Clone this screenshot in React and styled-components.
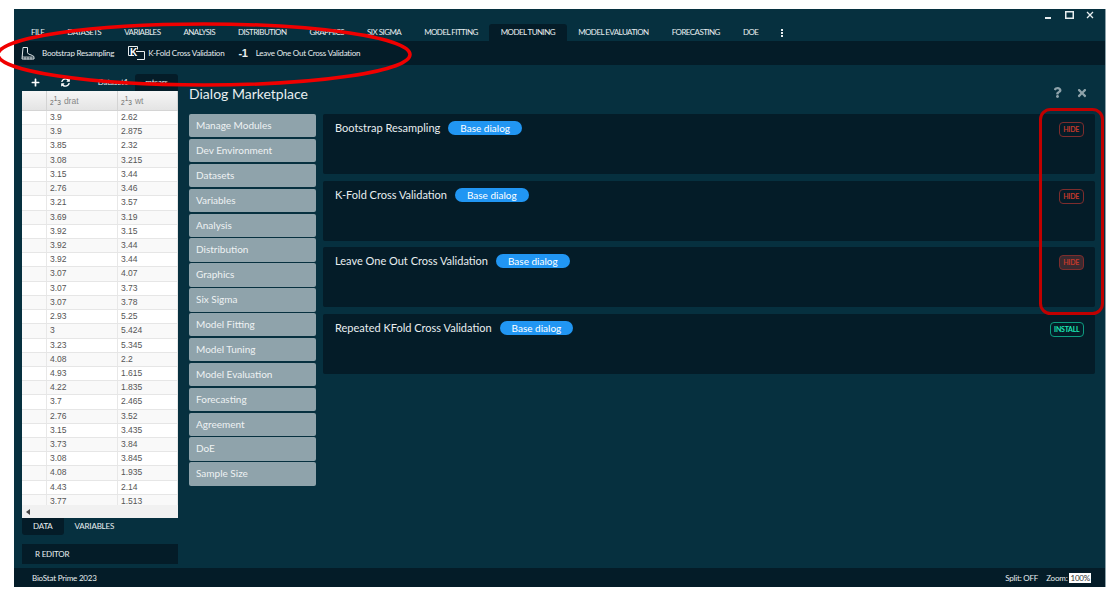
import styled, { createGlobalStyle } from "styled-components";
import { FaPlus, FaSyncAlt, FaQuestion, FaTimes } from "react-icons/fa";

const TABS = ["FILE", "DATASETS", "VARIABLES", "ANALYSIS", "DISTRIBUTION", "GRAPHICS", "SIX SIGMA", "MODEL FITTING", "MODEL TUNING", "MODEL EVALUATION", "FORECASTING", "DOE"];

const ROWS = [
    ["3.9", "2.62"], ["3.9", "2.875"], ["3.85", "2.32"], ["3.08", "3.215"], ["3.15", "3.44"], ["2.76", "3.46"], ["3.21", "3.57"],
    ["3.69", "3.19"], ["3.92", "3.15"], ["3.92", "3.44"], ["3.92", "3.44"], ["3.07", "4.07"], ["3.07", "3.73"], ["3.07", "3.78"],
    ["2.93", "5.25"], ["3", "5.424"], ["3.23", "5.345"], ["4.08", "2.2"], ["4.93", "1.615"], ["4.22", "1.835"], ["3.7", "2.465"],
    ["2.76", "3.52"], ["3.15", "3.435"], ["3.73", "3.84"], ["3.08", "3.845"], ["4.08", "1.935"], ["4.43", "2.14"], ["3.77", "1.513"],
];

const MENU = ["Manage Modules", "Dev Environment", "Datasets", "Variables", "Analysis", "Distribution", "Graphics", "Six Sigma", "Model Fitting", "Model Tuning", "Model Evaluation", "Forecasting", "Agreement", "DoE", "Sample Size"];

const DIALOGS = [
    { name: "Bootstrap Resampling", action: "HIDE" },
    { name: "K-Fold Cross Validation", action: "HIDE" },
    { name: "Leave One Out Cross Validation", action: "HIDE", hovered: true },
    { name: "Repeated KFold Cross Validation", action: "INSTALL" },
];

export default function App() {
    return (
        <>
            <GlobalStyle />
            <Window>
                <TitleBar>
                    <WindowButton>
                        <svg width="7" height="8" viewBox="0 0 7 8"><rect y="6" width="6" height="2" fill="#e8eef0" /></svg>
                    </WindowButton>
                    <WindowButton>
                        <svg width="9" height="8" viewBox="0 0 9 8"><rect x="0.75" y="0.75" width="7.5" height="6.5" fill="none" stroke="#e8eef0" strokeWidth="1.5" /></svg>
                    </WindowButton>
                    <WindowButton>
                        <svg width="8" height="8" viewBox="0 0 8 8"><path d="M1 1l6 6M7 1l-6 6" stroke="#e8eef0" strokeWidth="1.3" /></svg>
                    </WindowButton>
                </TitleBar>
                <TabBar>
                    {TABS.map((tab) => (
                        <Tab key={tab} $active={tab === "MODEL TUNING"}>{tab}</Tab>
                    ))}
                    <MoreDots>
                        <i /><i /><i />
                    </MoreDots>
                </TabBar>
                <Toolbar>
                    <ToolButton>
                        <BootIcon />
                        Bootstrap Resampling
                    </ToolButton>
                    <ToolButton $gap={3}>
                        <KFoldIcon />
                        K-Fold Cross Validation
                    </ToolButton>
                    <ToolButton $gap={8}>
                        <MinusOne>-1</MinusOne>
                        Leave One Out Cross Validation
                    </ToolButton>
                </Toolbar>
                <Main>
                    <DataPane>
                        <DataTools>
                            <ToolSlot><FaPlus size={9} color="#fff" /></ToolSlot>
                            <ToolSlot><FaSyncAlt size={9} color="#fff" /></ToolSlot>
                            <DataTab>Dataset1</DataTab>
                            <DataTab $active>mtcars</DataTab>
                        </DataTools>
                        <DataGrid>
                            <GridHead>
                                <HeadCell />
                                <HeadCell><NumIcon /> drat</HeadCell>
                                <HeadCell><NumIcon /> wt</HeadCell>
                            </GridHead>
                            <GridBody>
                                {ROWS.map((row, i) => (
                                    <GridRow key={i} $odd={i % 2 === 1}>
                                        <Cell />
                                        <Cell>{row[0]}</Cell>
                                        <Cell>{row[1]}</Cell>
                                    </GridRow>
                                ))}
                            </GridBody>
                            <ScrollTrack>
                                <svg width="4" height="6" viewBox="0 0 4 6"><path d="M4 0v6L0 3z" fill="#444" /></svg>
                            </ScrollTrack>
                        </DataGrid>
                        <PaneTabs>
                            <PaneTab $active>DATA</PaneTab>
                            <PaneTab>VARIABLES</PaneTab>
                        </PaneTabs>
                        <EditorBar>R EDITOR</EditorBar>
                    </DataPane>
                    <Market>
                        <MarketHead>
                            <MarketTitle>Dialog Marketplace</MarketTitle>
                            <MarketIcons>
                                <FaQuestion size={11} />
                                <FaTimes size={12} />
                            </MarketIcons>
                        </MarketHead>
                        <MarketBody>
                            <SideMenu>
                                {MENU.map((item) => (
                                    <MenuItem key={item}>{item}</MenuItem>
                                ))}
                            </SideMenu>
                            <CardList>
                                {DIALOGS.map((dialog) => (
                                    <Card key={dialog.name}>
                                        <CardTitle>{dialog.name}</CardTitle>
                                        <Badge>Base dialog</Badge>
                                        <ActionButton $install={dialog.action === "INSTALL"} $hovered={dialog.hovered}>
                                            {dialog.action}
                                        </ActionButton>
                                    </Card>
                                ))}
                            </CardList>
                        </MarketBody>
                    </Market>
                </Main>
                <StatusBar>
                    <span>BioStat Prime 2023</span>
                    <StatusRight>
                        <span>Split: OFF</span>
                        <ZoomLabel>Zoom:</ZoomLabel>
                        <ZoomValue>100%</ZoomValue>
                    </StatusRight>
                </StatusBar>
            </Window>
            <Annotations width="1115" height="589" viewBox="0 0 1115 589">
                <ellipse cx="204" cy="54.500" rx="206" ry="30.500" fill="none" stroke="#f00000" strokeWidth="3.500" />
                <rect x="1040.500" y="109.500" width="62" height="204" rx="10" fill="none" stroke="#c00000" strokeWidth="3" />
            </Annotations>
        </>
    );
}

function BootIcon() {
    return (
        <svg width="14" height="13" viewBox="0 0 14 13" fill="none" stroke="#dfe6e9" strokeWidth="1">
            <path d="M2 .5h4.500v5.200l1 1.300 4 1.500c1 .4 1.500 1 1.500 2v1.500H1z" />
            <path d="M1 10h12M4 10v2.500M7 10v2.500M10 10v2.500" strokeWidth=".8" />
        </svg>
    );
}

function KFoldIcon() {
    return (
        <svg width="17" height="14" viewBox="0 0 17 14" fill="none">
            <path d="M6 9.500H.5V.5h9v3" stroke="#e8eef0" strokeWidth="1" />
            <path d="M8 5.500h8.500v8H9" stroke="#e8eef0" strokeWidth="1" />
            <text x="2" y="9.500" fontFamily="Liberation Sans, sans-serif" fontSize="10" fontWeight="700" fill="#fff">K</text>
        </svg>
    );
}

function NumIcon() {
    return (
        <NumGlyph>
            <small>2</small><b>1</b><small>3</small>
        </NumGlyph>
    );
}

const GlobalStyle = createGlobalStyle`
    body {
        margin: 0;
        background-color: #fff;
        font-family: 'Lato', sans-serif;
    }
`;

const Annotations = styled.svg`
    position: absolute;
    top: 0;
    left: 0;
    pointer-events: none;
`;

const Window = styled.div`
    width: 1091px;
    height: 578px;
    margin: 9px 0 0 14px;
    background-color: #06303f;
    display: flex;
    flex-direction: column;
    color: #e8eef0;
    border-right: 1px solid #8ea2aa;
    box-sizing: content-box;
`;

const TitleBar = styled.div`
    height: 15px;
    padding: 0 10px 3px 0;
    display: flex;
    justify-content: flex-end;
    align-items: center;
    gap: 11px;
    box-sizing: border-box;
`;

const WindowButton = styled.span`
    width: 10px;
    display: flex;
    justify-content: center;
`;

const TabBar = styled.div`
    height: 17px;
    display: flex;
    padding-left: 5.5px;
    align-items: stretch;
`;

const Tab = styled.div`
    padding: 0 11.5px;
    font-size: 8px;
    letter-spacing: -0.56px;
    line-height: 17px;
    white-space: nowrap;
    border-radius: 3px 3px 0 0;
    background-color: ${(props) => (props.$active ? "#041c28" : "transparent")};
`;

const MoreDots = styled.div`
    margin-left: 11px;
    display: flex;
    flex-direction: column;
    justify-content: center;
    gap: 1px;

    i {
        width: 2px;
        height: 2px;
        background-color: #e8eef0;
    }
`;

const Toolbar = styled.div`
    height: 24px;
    background-color: #041c28;
    display: flex;
    align-items: center;
    padding-left: 7px;
    gap: 14px;
`;

const ToolButton = styled.div`
    display: flex;
    align-items: center;
    gap: ${(props) => props.$gap || 7}px;
    font-size: 8px;
    letter-spacing: -0.22px;
    white-space: nowrap;
`;

const MinusOne = styled.span`
    font-family: 'Liberation Sans', sans-serif;
    font-size: 11px;
    font-weight: 700;
`;

const Main = styled.div`
    flex: 1;
    min-height: 0;
    display: flex;
`;

const DataPane = styled.div`
    width: 156px;
    margin-left: 8px;
    display: flex;
    flex-direction: column;
`;

const DataTools = styled.div`
    height: 26px;
    padding: 9px 0 0 9px;
    display: flex;
    align-items: center;
    box-sizing: border-box;
`;

const ToolSlot = styled.span`
    width: 30px;
    display: flex;
`;

const DataTab = styled.div`
    font-size: 8px;
    letter-spacing: -0.2px;
    line-height: 17px;
    height: 17px;
    width: ${(props) => (props.$active ? "43px" : "44px")};
    text-align: center;
    border-radius: 3px 3px 0 0;
    background-color: ${(props) => (props.$active ? "#041c28" : "transparent")};
`;

const DataGrid = styled.div`
    height: 427px;
    background-color: #fff;
    color: #555;
    font-family: 'Liberation Sans', sans-serif;
    font-size: 8.5px;
    display: flex;
    flex-direction: column;
`;

const GridHead = styled.div`
    height: 20px;
    display: grid;
    grid-template-columns: 25px 71px 1fr;
    background-image: linear-gradient(#f6f6f6, #e4e4e4);
    border-bottom: 1px solid #d4d4d4;
    box-sizing: border-box;
`;

const HeadCell = styled.div`
    display: flex;
    align-items: center;
    gap: 3px;
    padding-left: 3px;
    color: #888;
    border-right: 1px solid #d4d4d4;
`;

const NumGlyph = styled.span`
    display: inline-flex;
    align-items: baseline;
    color: #666;
    font-size: 6.5px;

    small {
        font-size: 6.5px;
        position: relative;
        top: 2px;
    }

    b {
        font-weight: 400;
        position: relative;
        top: -2px;
    }
`;

const GridBody = styled.div`
    flex: 1;
    overflow: hidden;
`;

const GridRow = styled.div`
    height: 14.22px;
    display: grid;
    grid-template-columns: 25px 71px 1fr;
    background-color: ${(props) => (props.$odd ? "#f9f9f9" : "#fff")};
    border-bottom: 1px solid #e6e6e6;
    box-sizing: border-box;
`;

const Cell = styled.div`
    padding-left: 3px;
    line-height: 13px;
    border-right: 1px solid #e8e8e8;
`;

const ScrollTrack = styled.div`
    height: 13px;
    background-color: #f1f1f1;
    display: flex;
    align-items: center;
    padding-left: 4px;
`;

const PaneTabs = styled.div`
    height: 17px;
    display: flex;
`;

const PaneTab = styled.div`
    padding: 0 11px;
    font-size: 8px;
    letter-spacing: -0.2px;
    line-height: 17px;
    border-radius: 0 0 3px 3px;
    background-color: ${(props) => (props.$active ? "#041c28" : "transparent")};
`;

const EditorBar = styled.div`
    height: 20px;
    margin-top: 9px;
    padding-left: 13px;
    font-size: 8px;
    letter-spacing: -0.2px;
    line-height: 20px;
    background-color: #041c28;
`;

const Market = styled.div`
    flex: 1;
    padding: 0 10px 0 11px;
    display: flex;
    flex-direction: column;
`;

const MarketHead = styled.div`
    height: 49px;
    padding-top: 7px;
    display: flex;
    justify-content: space-between;
    align-items: center;
    box-sizing: border-box;
`;

const MarketTitle = styled.h1`
    margin: 0;
    font-size: 14px;
    font-weight: 400;
`;

const MarketIcons = styled.div`
    display: flex;
    gap: 13px;
    color: #8ea2aa;
    margin-right: 7px;
`;

const MarketBody = styled.div`
    display: flex;
    gap: 7px;
`;

const SideMenu = styled.nav`
    width: 127px;
    display: flex;
    flex-direction: column;
    gap: 1.45px;
`;

const MenuItem = styled.div`
    height: 23.45px;
    line-height: 23.45px;
    padding-left: 7px;
    font-size: 10px;
    color: #eef2f3;
    background-color: #8fa3ab;
    border-radius: 2px;
`;

const CardList = styled.div`
    flex: 1;
    display: flex;
    flex-direction: column;
    gap: 6.5px;
`;

const Card = styled.div`
    position: relative;
    height: 60px;
    padding: 7px 12px;
    display: flex;
    align-items: flex-start;
    gap: 8px;
    background-color: #041c28;
    border-radius: 2px;
    box-sizing: border-box;
`;

const CardTitle = styled.span`
    font-size: 11px;
    line-height: 14px;
`;

const Badge = styled.span`
    height: 14px;
    line-height: 14px;
    padding: 0 12px;
    font-size: 10px;
    color: #fff;
    background-color: #2196f3;
    border-radius: 7px;
`;

const ActionButton = styled.span`
    position: absolute;
    top: 8px;
    right: 11.5px;
    height: 13px;
    line-height: 13px;
    padding: 0 ${(props) => (props.$install ? "3px" : "3.5px")};
    font-size: 7px;
    letter-spacing: -0.25px;
    font-weight: 700;
    border-radius: 4px;
    color: ${(props) => (props.$install ? "#1de9b6" : "#c0392b")};
    border: 1px solid ${(props) => (props.$install ? "#0d9c80" : "#7d2d2d")};
    background-color: ${(props) => (props.$hovered ? "#3a2a30" : "transparent")};
`;

const StatusBar = styled.div`
    height: 19px;
    padding: 0 14px 0 18px;
    display: flex;
    justify-content: space-between;
    align-items: center;
    font-size: 8px;
    letter-spacing: -0.2px;
    background-color: #041c28;
`;

const StatusRight = styled.div`
    display: flex;
    align-items: center;
    gap: 8px;
`;

const ZoomLabel = styled.span`
    margin-right: -6px;
`;

const ZoomValue = styled.span`
    background-color: #fff;
    color: #333;
    padding: 0 1px;
`;
